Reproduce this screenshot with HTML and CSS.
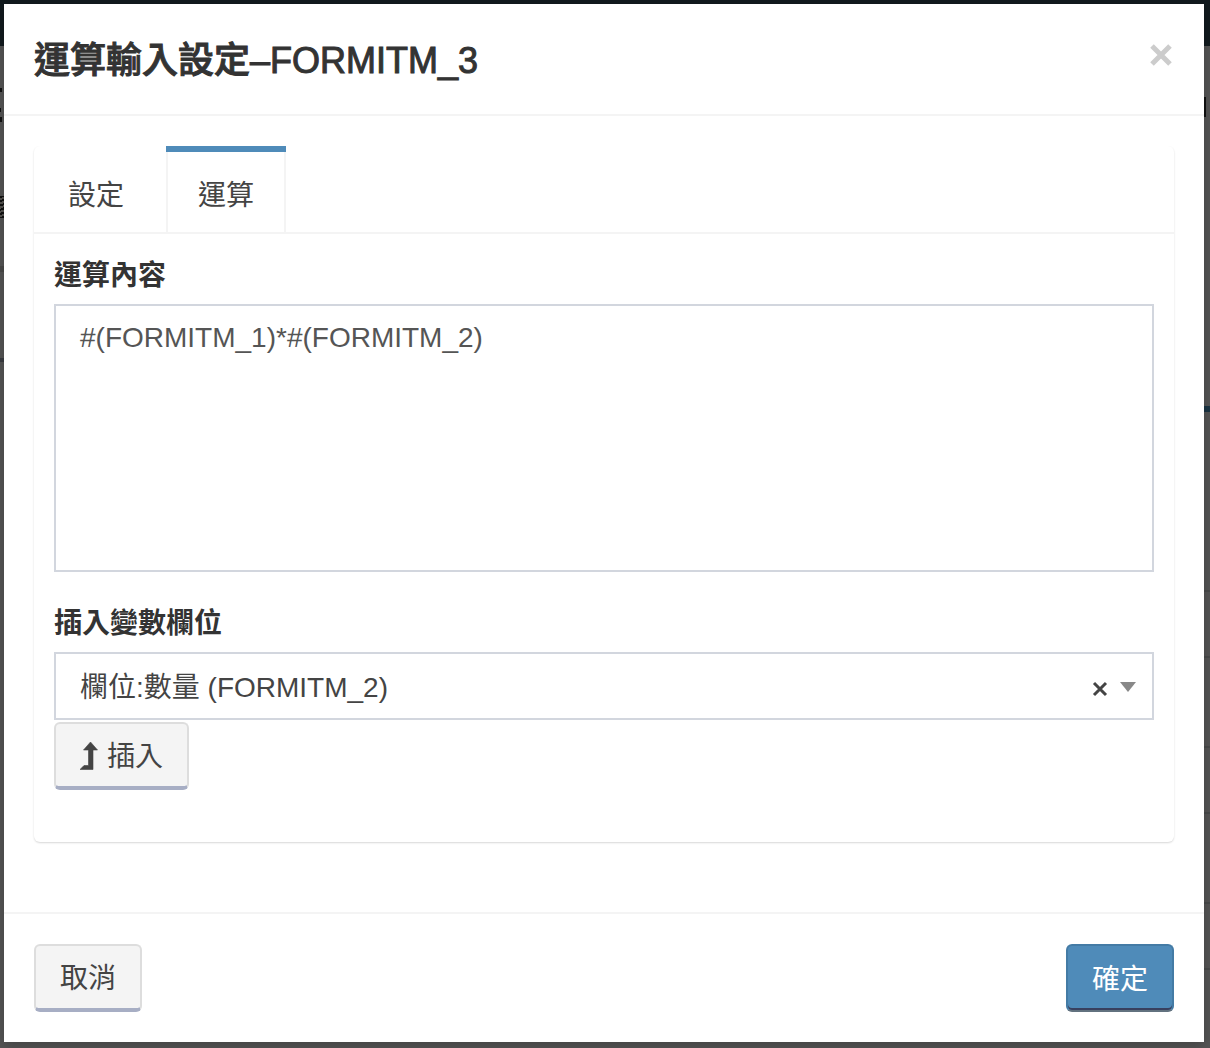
FILE: index.html
```html
<!DOCTYPE html>
<html lang="zh-Hant">
<head>
<meta charset="utf-8">
<meta name="viewport" content="width=device-width, initial-scale=1">
<title>運算輸入設定–FORMITM_3</title>
<link rel="stylesheet" href="styles.css">
</head>
<body>
<form class="modal" role="dialog" aria-labelledby="modal-title">
  <header class="modal-header">
    <h1 class="modal-title" id="modal-title">運算輸入設定–FORMITM_3</h1>
    <button class="close" type="button" aria-label="關閉">
      <svg width="24" height="24" viewBox="0 0 24 24" aria-hidden="true"><path d="M3 3l18 18M21 3L3 21" stroke="currentColor" stroke-width="5"/></svg>
    </button>
  </header>
  <div class="modal-body">
    <section class="tab-card">
      <nav class="tabs">
        <a class="tab" href="#settings"><span>設定</span></a>
        <a class="tab active" href="#formula" aria-current="true"><span>運算</span></a>
      </nav>
      <div class="tab-content">
        <div class="field">
          <label for="formula-text">運算內容</label>
          <textarea class="control" id="formula-text">#(FORMITM_1)*#(FORMITM_2)</textarea>
        </div>
        <div class="field">
          <label for="variable">插入變數欄位</label>
          <div class="select-box">
            <select class="control" id="variable">
              <option>欄位:數量 (FORMITM_2)</option>
            </select>
            <div class="select-tools">
              <button class="clear" type="button" aria-label="清除">
                <svg width="16" height="16" viewBox="0 0 16 16" aria-hidden="true"><path d="M2 2l12 12M14 2L2 14" stroke="currentColor" stroke-width="3"/></svg>
              </button>
              <span class="arrow"></span>
            </div>
          </div>
          <button class="btn insert" type="button">
            <svg width="18" height="28" viewBox="0 0 18 28" aria-hidden="true"><path d="M10.500 0L17.500 8H13V27.500H0L4 23.500H8.500V8H3.500Z" fill="currentColor" stroke="currentColor" stroke-width=".6"/></svg>
            插入
          </button>
        </div>
      </div>
    </section>
  </div>
  <footer class="modal-footer">
    <button class="btn" type="button">取消</button>
    <button class="btn primary" type="submit">確定</button>
  </footer>
</form>
</body>
</html>
```
FILE: styles.css
```css
* {
  box-sizing: border-box;
}

/* Dimmed page behind the dialog */
body {
  margin: 0;
  padding: 4px 6px 6px 4px;
  min-height: 100vh;
  font-family: "Liberation Sans", "Noto Sans CJK TC", sans-serif;
  font-size: 28px;
  line-height: 40px;
  color: #333;
  background-color: #545454;
  background-repeat: no-repeat;
  background-image:
    linear-gradient(#121a1e, #121a1e),
    linear-gradient(#111, #111),
    linear-gradient(#111, #111),
    linear-gradient(#111, #111),
    repeating-linear-gradient(160deg, #111 0 2px, #53514e 2px 4px),
    linear-gradient(#484847, #484847),
    linear-gradient(#393b40, #393b40),
    linear-gradient(#111, #111),
    linear-gradient(#1b3443, #1b3443),
    linear-gradient(#484a4a, #484a4a),
    linear-gradient(#484a4a, #484a4a),
    linear-gradient(#484a4a, #484a4a),
    linear-gradient(#484a4a, #484a4a),
    linear-gradient(#484a4a, #484a4a),
    linear-gradient(#484a4a, #484a4a);
  background-size:
    100% 46px,
    2px 4px,
    1px 4px,
    2px 5px,
    4px 22px,
    4px 6px,
    4px 4px,
    2px 20px,
    6px 6px,
    6px 2px,
    6px 2px,
    6px 2px,
    6px 2px,
    6px 2px,
    6px 2px;
  background-position:
    0 0,
    0 88px,
    0 108px,
    0 117px,
    0 196px,
    0 266px,
    0 358px,
    right 4px top 97px,
    right 406px,
    right 590px,
    right 656px,
    right 746px,
    right 812px,
    right 902px,
    right 968px;
}

.modal {
  background: #fff;
  box-shadow: 0 4px 12px rgba(0, 0, 0, .2);
}

.modal-header {
  display: flex;
  justify-content: space-between;
  align-items: flex-start;
  padding: 32px 30px 28px;
  border-bottom: 2px solid #f4f4f4;
}

.modal-title {
  margin: 0;
  font-size: 36px;
  font-weight: 500;
  line-height: 50px;
  -webkit-text-stroke: 1px currentColor;
}

.close,
.clear {
  display: flex;
  padding: 0;
  border: 0;
  background: none;
  cursor: pointer;
}

.close {
  margin: 7px 1px;
  color: #ccc;
}

.modal-body {
  padding: 30px 30px 70px;
}

.tab-card {
  border-radius: 6px;
  box-shadow: 0 1px 2px rgba(0, 0, 0, .16);
  clip-path: inset(0 -4px -4px);
}

.tabs {
  display: flex;
  gap: 10px;
  padding-left: 2px;
  border-bottom: 2px solid #f4f4f4;
}

.tab {
  border-top: 6px solid transparent;
  color: #444;
  text-decoration: none;
}

.tab span {
  display: block;
  padding: 24px 30px 16px;
  border: 0 solid transparent;
  border-width: 0 2px;
}

.tab.active {
  border-color: #4f8bb9;
}

.tab.active span {
  border-color: #f4f4f4;
}

.tab-content {
  padding: 22px 20px 52px;
}

.field + .field {
  margin-top: 32px;
}

label {
  display: block;
  margin-bottom: 8px;
  font-weight: 700;
}

.control {
  display: block;
  width: 100%;
  padding: 12px 24px;
  border: 2px solid #d2d6de;
  border-radius: 0;
  background: #fff;
  font: inherit;
  color: #555;
}

textarea.control {
  height: 268px;
  resize: none;
}

select.control {
  height: 68px;
  padding: 14px 24px 12px;
  appearance: none;
  color: #444;
}

.select-box {
  position: relative;
  margin-bottom: 2px;
}

.select-tools {
  position: absolute;
  inset: 2px 18px 0 auto;
  display: flex;
  align-items: center;
  gap: 12px;
}

.clear {
  padding-top: 4px;
  color: #444;
}

.arrow {
  border: 8px solid transparent;
  border-top: 10px solid #888;
  border-bottom: 0;
}

.btn {
  display: flex;
  align-items: center;
  gap: 9px;
  height: 68px;
  padding: 4px 24px 0;
  border: 2px solid #ddd;
  border-bottom: 4px solid #a7aec4;
  border-radius: 6px;
  background: #f4f4f4;
  font: inherit;
  color: #444;
  cursor: pointer;
}

.btn svg {
  margin-bottom: 2px;
}

.btn.primary {
  border: 2px solid #447ba5;
  border-bottom: 2px solid #62727f;
  background: #4f8bb9;
  box-shadow: inset 0 -2px #38405f;
  color: #fff;
}

.modal-footer {
  display: flex;
  justify-content: space-between;
  padding: 30px;
  border-top: 2px solid #f4f4f4;
}
```
